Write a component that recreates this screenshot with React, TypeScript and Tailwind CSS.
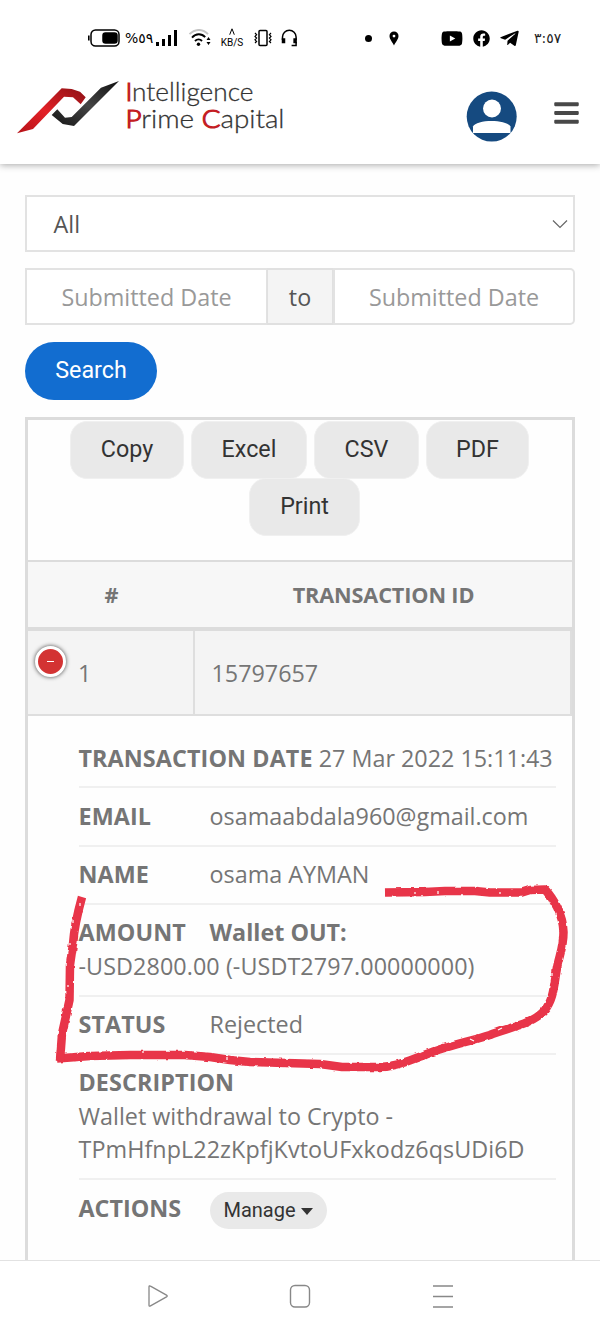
import React from 'react';
import { FaBars, FaFacebook, FaTelegramPlane, FaYoutube } from 'react-icons/fa';

interface DetailRow {
    label: string;
    value: React.ReactNode;
}

const details: DetailRow[] = [
    { label: 'TRANSACTION DATE', value: '27 Mar 2022 15:11:43' },
    { label: 'EMAIL', value: 'osamaabdala960@gmail.com' },
    { label: 'NAME', value: 'osama AYMAN' },
    { label: 'AMOUNT', value: <><b>Wallet OUT:</b><br /><span className="tracking-[0.08px]">-USD2800.00 (-USDT2797.00000000)</span></> },
    { label: 'STATUS', value: 'Rejected' },
    { label: 'DESCRIPTION', value: <><br />Wallet withdrawal to Crypto -<br /><span className="tracking-[0.06px]">TPmHfnpL22zKpfjKvtoUFxkodz6qsUDi6D</span></> },
];

const StatusBar: React.FC = () => (
    <div className="flex h-[77px] items-start justify-between pl-[88px] pr-[38px] pt-[26px] text-black">
        <div className="flex h-6 items-center">
            <svg width="33" height="18" viewBox="0 0 33 18" fill="none" stroke="currentColor" strokeWidth="1.5">
                <rect x="3" y="1" width="28" height="16" rx="4.5" />
                <path d="M0.8 6.5v5" strokeWidth="1.6" />
                <rect x="15" y="4" width="14" height="10" rx="2.5" fill="currentColor" />
            </svg>
            <span dir="ltr" className="ml-[4px] w-[26px] whitespace-nowrap font-['DejaVu_Sans'] text-[14px] leading-5 tracking-[-1.1px]">%٥٩</span>
            <svg className="ml-[4px]" width="23" height="18" viewBox="0 0 23 18" fill="currentColor">
                <rect x="1" y="13" width="3" height="4" />
                <rect x="7" y="10" width="3" height="7" />
                <rect x="13" y="6" width="3" height="11" />
                <rect x="19" y="1" width="3" height="16" />
            </svg>
            <svg className="ml-[10px]" width="24" height="18" viewBox="0 0 24 18" fill="none" stroke="currentColor" strokeWidth="1.9">
                <path d="M1.5 5.2C7-0.5 15-0.5 20 5.2" stroke="#c4c4c4" />
                <path d="M4 8.6C8 4.2 13.5 4.2 17.2 8.2M7 12c2.2-2.2 5-2.2 7 0" />
                <circle cx="10.5" cy="15.3" r="1.7" fill="currentColor" stroke="none" />
                <path d="M20.500 8l2 3h-4zM20.500 16l2-3h-4z" fill="currentColor" stroke="none" />
            </svg>
            <div className="ml-[8px] flex w-[24px] flex-col items-center font-['Roboto'] text-[10px] leading-[10px]">
                <svg width="6" height="7" viewBox="0 0 6 7" fill="none" stroke="currentColor"><path d="M.7 6.7 3 .8l2.3 5.9" /></svg>
                <span className="mt-[3px]">KB/S</span>
            </div>
            <svg className="ml-[10px]" width="18" height="18" viewBox="0 0 18 18" fill="none" stroke="currentColor" strokeWidth="1.5">
                <rect x="5" y="1.5" width="8" height="15" rx="1" />
                <path d="M1 4l1.6 1.7L1 7.4l1.6 1.7L1 10.8l1.6 1.7L1 14M17 4l-1.6 1.7L17 7.4l-1.6 1.7 1.6 1.7-1.6 1.7L17 14" strokeWidth="1.2" />
            </svg>
            <svg className="ml-[9px]" width="18" height="18" viewBox="0 0 18 18" fill="none" stroke="currentColor" strokeWidth="1.500">
                <path d="M1.500 11V8a6.800 6.800 0 0 1 13.600 0v3M15.100 13v3.500h-4.500" />
                <path d="M1.500 10h2v3.500h-2zM13.100 10h2v3.500h-2z" fill="currentColor" />
            </svg>
        </div>
        <div className="flex h-6 items-center">
            <span className="h-[7px] w-[7px] rounded-full bg-black" />
            <svg className="ml-[17px]" width="10" height="15" viewBox="0 0 10 15">
                <path fillRule="evenodd" d="M5 .5a4.400 4.400 0 0 1 4.500 4.500C9.500 8.500 6.500 11 5 14.500 3.500 11 .5 8.500 .5 5A4.400 4.400 0 0 1 5 .5zM5 3.700a1.400 1.400 0 1 0 0 2.800 1.400 1.400 0 0 0 0-2.800z" />
            </svg>
            <FaYoutube className="ml-[42px] h-[21px] w-[22px]" />
            <FaFacebook className="ml-[10px] h-[17px] w-[17px]" />
            <FaTelegramPlane className="ml-[9px] h-[21px] w-[21px]" />
            <span dir="ltr" className="ml-[14px] w-[28px] whitespace-nowrap font-['DejaVu_Sans'] text-[14px] leading-5 tracking-[-0.4px] text-[#222]">٣:٥٧</span>
        </div>
    </div>
);

const Logo: React.FC = () => (
    <svg className="overflow-visible" width="272" height="60" viewBox="0 0 272 60" fontFamily="Lato, sans-serif" fontSize="26" fontWeight="300">
        <defs>
            <linearGradient id="red" x1="0" y1="1" x2="1" y2="0">
                <stop offset="0" stopColor="#b51218" />
                <stop offset=".45" stopColor="#e32127" />
                <stop offset="1" stopColor="#8d1115" />
            </linearGradient>
            <linearGradient id="dark" x1="0" y1="1" x2="1" y2="0">
                <stop offset="0" stopColor="#151515" />
                <stop offset=".5" stopColor="#454545" />
                <stop offset="1" stopColor="#111" />
            </linearGradient>
        </defs>
        <path d="M1 56.300 45.700 11.300 55.700 12 64 14.700 69.700 20.300 64.700 27.300 57 20.300 48 19.700 17 52z" fill="url(#red)" />
        <path d="M103 4 58 49 46.700 47 35.700 38 41.300 32.300 49 40.700 55.700 40 85 10.700z" fill="url(#dark)" />
        <g fill="#333" stroke="#333" strokeWidth=".3">
            <text x="109.500" y="23.500" textLength="128" lengthAdjust="spacingAndGlyphs"><tspan fill="#c41e24" stroke="#c41e24" strokeWidth="1.200">I</tspan>ntelligence</text>
            <text x="109.500" y="50.500" textLength="159" lengthAdjust="spacingAndGlyphs"><tspan fill="#c41e24" stroke="#c41e24" strokeWidth="1.200">P</tspan>rime <tspan fill="#c41e24" stroke="#c41e24" strokeWidth="1.200">C</tspan>apital</text>
        </g>
    </svg>
);

const ExportButton: React.FC<{ label: string; width: string }> = ({ label, width }) => (
    <button className={`h-[58px] shrink-0 rounded-[17px] border border-[#f0f0f0] bg-[#e9e9e9] font-['Roboto'] text-[23.3px] text-[#333] ${width}`}>{label}</button>
);

// Red marker drawn around the amount and status rows
const Marker: React.FC = () => (
    <svg className="pointer-events-none absolute left-0 top-[870px]" width="600" height="220" viewBox="0 870 600 220" fill="none">
        <defs>
            <filter id="rough" x="0" y="870" width="600" height="220" filterUnits="userSpaceOnUse">
                <feTurbulence type="fractalNoise" baseFrequency=".2" numOctaves="1" seed="4" result="n" />
                <feDisplacementMap in="SourceGraphic" in2="n" scale="3" xChannelSelector="R" yChannelSelector="G" />
            </filter>
        </defs>
        <g filter="url(#rough)" stroke="#e83448" strokeWidth="8.500" strokeLinejoin="round">
            <path d="M385 892.500 425 892 445 891 475 891 490 892.500 522 892.500 530 890 545 889.500C553 898 563 914 563.500 932 563.500 948 559 956 557 968 554 984 554 1000 544 1011 531 1025 506 1028 490 1035 468 1042 442 1047 422 1056 408 1061 395 1067 380 1067L342 1067 320 1064 250 1062 230 1060 210 1057 185 1055 130 1055 90 1056 57 1058.500" />
            <path d="M82 897C77 915 74 929 73 944L70 965 69.500 1000 62 1034 60 1061" />
        </g>
        <path d="M80 903v3M73 920v3M70 943v2M68 985v2M143 1051v2M227 1057v3M415 892v2M438 891v3M500 892v2M552 973v3M498 1030l4-2M470 1039l4 2" stroke="white" strokeWidth="1.200" />
    </svg>
);

export default function App() {
    return (
        <div className="relative flex h-[1333px] w-[600px] flex-col overflow-hidden bg-[#fefefe] font-['Open_Sans',sans-serif] text-[23.33px] leading-[33.33px] text-[#757575]">
            <header className="h-[164px] shrink-0 bg-white shadow-[0_1px_7px_rgba(0,0,0,0.35)]">
                <StatusBar />
                <div className="flex pl-4 pr-[21px]">
                    <Logo />
                    <svg className="ml-[178px] mt-[14px]" width="52" height="52" viewBox="0 0 52 52">
                        <circle cx="25.700" cy="25.600" r="25" fill="#154a80" />
                        <circle cx="26" cy="17.500" r="9" fill="white" />
                        <path d="M7 42v-6.500c3-7.500 34-7.500 37.500 0V42z" fill="white" />
                    </svg>
                    <FaBars className="ml-auto mt-[22px] h-[28px] w-[25px] text-[#484848]" />
                </div>
            </header>

            <main className="flex grow flex-col px-[25px] pt-[31px]">
                <div className="flex h-[57px] shrink-0 items-center justify-between border-2 border-[#e2e2e2] bg-white pl-[26.5px] pr-[5px] text-[#555]">
                    <span className="pt-[2px]">All</span>
                    <svg width="16" height="10" viewBox="0 0 16 10" fill="none" stroke="#666" strokeWidth="1.2"><path d="m1 1.5 7 7 7-7" /></svg>
                </div>

                <div className="mt-4 flex h-[57px] shrink-0 text-center leading-[55px] text-[#999]">
                    <div className="w-[242px] border-2 border-r-[1.5px] border-[#e2e2e2] bg-white">Submitted Date</div>
                    <div className="w-[66px] border-y-2 border-l border-r border-[#e0e0e0] bg-[#f4f4f4] text-[#555]">to</div>
                    <div className="w-[242px] rounded-r-[5px] border-2 border-[#e2e2e2] bg-white">Submitted Date</div>
                </div>

                <button className="mt-[17px] h-[58px] w-[132px] shrink-0 rounded-full bg-[#126dd0] font-['Roboto'] text-[23.3px] text-white">Search</button>

                <section className="mt-[17px] flex grow flex-col border-x-[3px] border-t-[3px] border-[#dcdcdc] bg-[#fefefe]">
                    <div className="flex h-[140px] shrink-0 flex-wrap content-start justify-center gap-x-[7px] pr-px pt-[0.5px]">
                        <ExportButton label="Copy" width="w-[114px]" />
                        <ExportButton label="Excel" width="w-[116px]" />
                        <ExportButton label="CSV" width="w-[105px]" />
                        <ExportButton label="PDF" width="w-[103px]" />
                        <ExportButton label="Print" width="w-[111px] -mt-px ml-[10px]" />
                    </div>

                    <div className="flex h-[71px] shrink-0 items-center border-b-4 border-t-2 border-[#dcdcdc] bg-[#f7f7f7] text-center text-[21.67px] font-bold tracking-[-0.13px]">
                        <div className="w-[167px]">#</div>
                        <div className="grow">TRANSACTION ID</div>
                    </div>

                    <div className="flex h-[85px] shrink-0 border-b-2 border-r-2 border-[#dedede] bg-[#f4f4f4]">
                        <div className="flex w-[167px] border-r-2 border-[#dedede] pl-[6.5px]">
                            <span className="mt-[14.5px] flex h-[31px] w-[31px] items-center justify-center rounded-full border-[3.5px] border-white bg-[#d33333] shadow-[0_0_4px_#444]">
                                <span className="h-px w-[7px] bg-white" />
                            </span>
                            <span className="ml-[12.5px] mt-[26px]">1</span>
                        </div>
                        <div className="pl-[16.5px] pt-[26px]">15797657</div>
                    </div>

                    <ul className="ml-[50.5px] mt-[14px] w-[477px] whitespace-nowrap">
                        {details.map(row => (
                            <li key={row.label} className="border-b-2 border-[#f0f0f0] pb-[11.5px] pt-[11.5px]">
                                <span className="inline-block min-w-[125px] font-bold tracking-[0.1px]">{row.label}</span> {row.value}
                            </li>
                        ))}
                        <li className="flex pt-[12px]">
                            <span className="w-[131px] font-bold">ACTIONS</span>
                            <button className="flex h-[37px] w-[117px] items-center justify-center gap-[5px] rounded-full bg-[#e9e9e9] font-['Roboto'] text-[20px] text-[#333]">
                                Manage
                                <span className="mt-[2px] border-x-[6.5px] border-t-[7px] border-x-transparent border-t-[#333]" />
                            </button>
                        </li>
                    </ul>
                </section>
            </main>

            <nav className="flex h-[73px] shrink-0 justify-center gap-[119px] border-t-[1.5px] border-[#e2e2e2] bg-white pt-[23px] text-[#888]">
                <svg width="24" height="24" viewBox="0 0 24 24" fill="none" stroke="currentColor" strokeWidth="1.3"><path d="M4 2.800v18.400q0 1.600 1.500.7l16-9q1.500-.9 0-1.800l-16-9Q4 1.200 4 2.800z" /></svg>
                <svg width="24" height="24" viewBox="0 0 24 24" fill="none" stroke="currentColor" strokeWidth="1.4"><rect x="2.500" y="1.500" width="19" height="21.500" rx="4.500" /></svg>
                <svg width="24" height="24" viewBox="0 0 24 24" fill="none" stroke="currentColor" strokeWidth="1.5"><path d="M2 2h20M2 12.500h20M2 23h20" /></svg>
            </nav>
            <Marker />
        </div>
    );
}
